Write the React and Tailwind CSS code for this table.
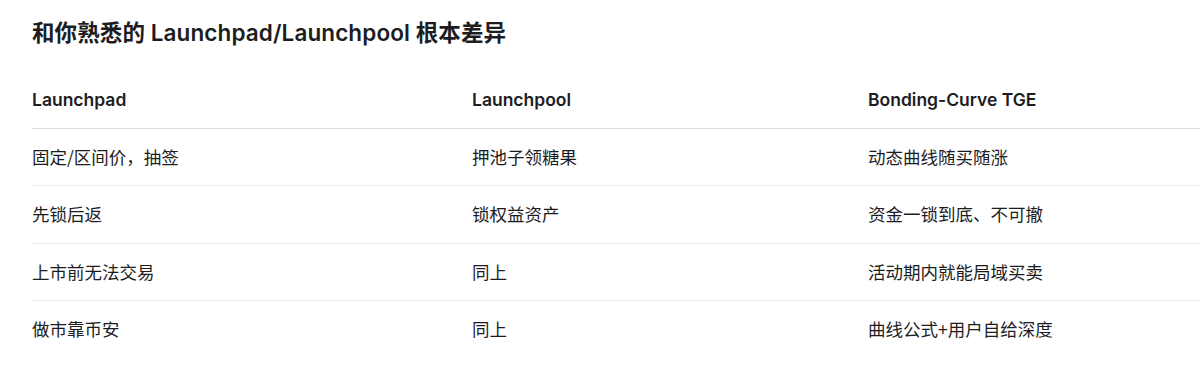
import React from "react";

const rows = [
  ["固定/区间价，抽签", "押池子领糖果", "动态曲线随买随涨"],
  ["先锁后返", "锁权益资产", "资金一锁到底、不可撤"],
  ["上市前无法交易", "同上", "活动期内就能局域买卖"],
  ["做市靠币安", "同上", "曲线公式+用户自给深度"],
];

function App() {
  return (
    <div
      className="min-h-screen bg-white pl-8 pt-[16px] text-[#1d1d1f]"
      style={{ fontFamily: 'Inter, "Noto Sans CJK SC", sans-serif' }}
    >
      {/* Title */}
      <h2 className="text-[22.5px] font-semibold leading-[34px] tracking-[0.1px]">
        和你熟悉的 Launchpad/Launchpool 根本差异
      </h2>

      {/* Comparison table */}
      <table className="mt-[21px] w-full border-collapse text-left text-[17.5px]">
        <thead>
          <tr className="border-b border-[#dcdcdc]">
            <th className="w-[440px] pt-[17px] pb-[15px] font-semibold leading-[24.6px]">Launchpad</th>
            <th className="w-[396px] pt-[17px] pb-[15px] font-semibold leading-[24.6px]">Launchpool</th>
            <th className="pt-[17px] pb-[15px] font-semibold leading-[24.6px]">Bonding-Curve TGE</th>
          </tr>
        </thead>
        <tbody style={{ fontFamily: '"Noto Sans CJK SC", sans-serif' }}>
          {rows.map((r, i) => (
            <tr
              key={i}
              className={i < rows.length - 1 ? "border-b border-[#ececec]" : ""}
            >
              {r.map((c, j) => (
                <td key={j} className="py-4 leading-[24.6px]">
                  {c}
                </td>
              ))}
            </tr>
          ))}
        </tbody>
      </table>
    </div>
  );
}

export default App;
